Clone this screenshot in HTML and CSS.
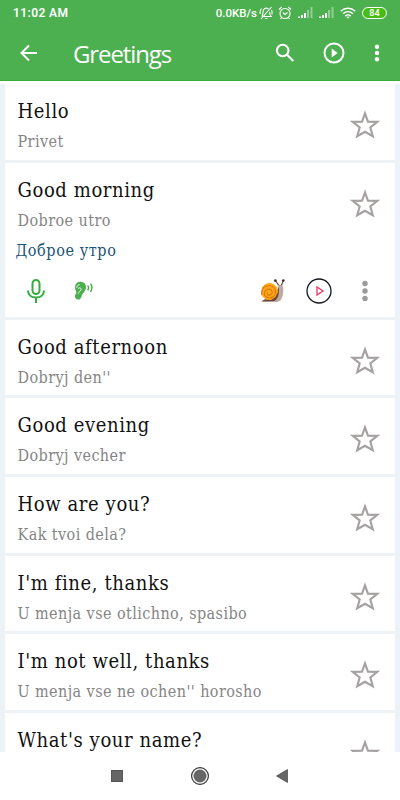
FILE: index.html
```html
<!DOCTYPE html>
<html lang="en">

<head>
    <meta charset="utf-8">
    <title>Greetings</title>
    <link rel="stylesheet" href="styles.css">
</head>

<body>

    <svg class="symbols">
        <symbol id="star" viewBox="0 0 30 30">
            <path d="M15 4.2l2.800 7.800 8.700.1-6.500 5.200 2.300 8.200-7.300-4.200-7.300 4.200 2.300-8.200-6.500-5.200 8.700-.1z" fill="none" stroke="#a5a1a1" stroke-width="2" stroke-miterlimit="8" />
        </symbol>
        <symbol id="signal" viewBox="0 0 15 11">
            <path d="M0 11V9.500h2V11zM3 11V8h2v3zM6 11V6h2v5z" fill="#fff" />
            <path d="M9 11V3h2v8zM12.500 11V0h2v11z" fill="#fff" opacity=".4" />
        </symbol>
    </svg>

    <header class="header">
        <div class="status">
            <span class="time">11:02 AM</span>
            <span class="speed">0.0KB/s</span>
            <svg class="bell" viewBox="0 0 14 14" fill="none" stroke="#fff" stroke-width="1.1">
                <path d="M3 10.500h9c-1-1-1.300-2-1.300-4.500M9.500 3C7 1 4 2.500 4 6c0 2-.3 3-1 4.500M6 12.500h2.500M12.500 1L2 13M1.200 8c-.4-2 0-4 1.300-5.500M12.500 4c.7 1.500.7 3 .3 4.500" />
            </svg>
            <svg class="alarm" viewBox="0 0 14 14" fill="none" stroke="#fff" stroke-width="1.100">
                <circle cx="7" cy="7.500" r="5" />
                <path d="M1 3.500L3.800 1M13 3.500L10.200 1M4.800 6.500L7 8.500l2.500-2M3.500 11.500l-1 1.500M10.500 11.500l1 1.500" />
            </svg>
            <svg class="signal"><use href="#signal" /></svg>
            <svg class="signal"><use href="#signal" /></svg>
            <svg class="wifi" viewBox="0 0 16 12" fill="none" stroke="#fff" stroke-width="1.5">
                <path d="M.7 4.200c4.200-3.900 10.400-3.900 14.600 0M3 6.700c3-2.700 7-2.700 10 0M5.300 9.100c1.600-1.500 3.800-1.500 5.400 0" />
                <path d="M6.500 10L8 11.700 9.500 10c-.9-.8-2.100-.8-3 0z" fill="#fff" stroke="none" />
            </svg>
            <span class="battery">84</span>
        </div>
        <div class="toolbar">
            <svg class="back" viewBox="0 0 18 18" fill="none" stroke="#fff" stroke-width="2">
                <path d="M17 9H2M9 1.500L1.500 9 9 16.500" />
            </svg>
            <h1 class="title">Greetings</h1>
            <svg class="search" viewBox="0 0 20 20" fill="none" stroke="#fff" stroke-width="2.100">
                <circle cx="7.700" cy="7.500" r="5.800" />
                <path d="M11.800 11.600L18.300 18" />
            </svg>
            <svg class="play" viewBox="0 0 22 22">
                <circle cx="11" cy="11" r="9.500" fill="none" stroke="#fff" stroke-width="2" />
                <path d="M8.700 6.500v9l6-4.500z" fill="#fff" />
            </svg>
            <svg class="more" viewBox="0 0 6 18" fill="#fff">
                <circle cx="3" cy="2.800" r="2.200" />
                <circle cx="3" cy="9" r="2.200" />
                <circle cx="3" cy="15.200" r="2.200" />
            </svg>
        </div>
    </header>

    <main class="list">
        <div class="card">
            <div class="phrase">Hello</div>
            <div class="translit">Privet</div>
            <svg class="star"><use href="#star" /></svg>
        </div>

        <div class="card open">
            <div class="phrase">Good morning</div>
            <div class="translit">Dobroe utro</div>
            <svg class="star"><use href="#star" /></svg>
            <div class="russian">Доброе утро</div>
            <div class="actions">
                <svg class="mic" viewBox="0 0 18 24" fill="none" stroke="#35ad3c" stroke-width="2">
                    <rect x="5.500" y="1" width="7" height="14" rx="3.500" />
                    <path d="M1 11.500c0 4.500 3.500 7 8 7s8-2.500 8-7M9 18.500V24" />
                </svg>
                <svg class="ear" viewBox="0 0 20 20">
                    <path d="M1 6.500C1 2.800 3.300.8 6.500.8c3.500 0 5.500 2.300 5.500 5.400 0 3.200-1.800 4.700-3.300 6.500-1.400 1.800-1 5.800-4.500 5.800-2.400 0-3.500-1.700-3.200-4 .2-1.300 1.400-1.700 1.300-3C2.200 10 1 8.600 1 6.500z" fill="#4caf50" />
                    <path d="M2.800 7c0-2.200 1.200-3.300 2.900-3.300M4 7.700c2-1.700 3.500-.3 3 1.200-.6 1.600-2.700 1.800-2.700 3.800" fill="none" stroke="#fff" stroke-width=".9" />
                    <path d="M13.700 4.300c1 1.500 1 3.400 0 5M16.500 2.500c1.900 2.800 1.900 5.700 0 8.500" fill="none" stroke="#35ad3c" stroke-width="1.300" />
                </svg>
                <svg class="snail" viewBox="0 0 24 24">
                    <path d="M.5 23c4-.2 7-3 10-5 3-1.500 6-5.500 7-10l-3-6 .7-.5 3.300 4.500h1.500l2-4.500.8.4-1.300 5c1.300 2 .8 5 .4 8-.5 5-3 8-6.400 8z" fill="#c0a9a2" />
                    <path d="M.5 22.500c3-3.500 7-2 10-5 3-1.500 5.500-4 7.300-10 .3 6 .3 11.500-4.300 14.500z" fill="#6b463d" />
                    <path d="M14.500 1.800l3.300 4.500M22.300 1.500l-2 4.800" fill="none" stroke="#6b463d" stroke-width="1" />
                    <circle cx="14.300" cy="1.600" r="1.400" fill="#49332f" />
                    <circle cx="22.300" cy="1.600" r="1.400" fill="#49332f" />
                    <path d="M1 8.500l3-3.200 4.500-1.500 4.500 1.500L16 8.500l1 4.500-2.500 5-4.500 3-5-.3-4.200-4z" fill="#ffa719" />
                    <path d="M.8 16C-.5 9.500 4 6.500 8.500 6.800c4.200.3 6.400 3.300 6 7-.4 3.300-3.500 5.700-7 5-3.500-.6-4.700-3.300-3.900-5.800.8-2.600 4.200-3.700 6.200-2.200 2.200 1.600 1.500 4.800-.8 5.300-1.800.4-3.200-1.100-2.500-2.600" fill="none" stroke="#d9780e" stroke-width="1.100" />
                </svg>
                <svg class="listen" viewBox="0 0 26 26" fill="none">
                    <circle cx="13" cy="13" r="12" stroke="#15171f" stroke-width="1.300" />
                    <path d="M11 9v8l6-4z" stroke="#f4365b" stroke-width="1.300" />
                </svg>
                <svg class="dots" viewBox="0 0 6 22" fill="#9c9a9a">
                    <circle cx="3" cy="3.500" r="2.700" />
                    <circle cx="3" cy="11" r="2.700" />
                    <circle cx="3" cy="18.500" r="2.700" />
                </svg>
            </div>
        </div>

        <div class="card">
            <div class="phrase">Good afternoon</div>
            <div class="translit">Dobryj den''</div>
            <svg class="star"><use href="#star" /></svg>
        </div>

        <div class="card">
            <div class="phrase">Good evening</div>
            <div class="translit">Dobryj vecher</div>
            <svg class="star"><use href="#star" /></svg>
        </div>

        <div class="card">
            <div class="phrase">How are you?</div>
            <div class="translit">Kak tvoi dela?</div>
            <svg class="star"><use href="#star" /></svg>
        </div>

        <div class="card">
            <div class="phrase">I'm fine, thanks</div>
            <div class="translit">U menja vse otlichno, spasibo</div>
            <svg class="star"><use href="#star" /></svg>
        </div>

        <div class="card">
            <div class="phrase">I'm not well, thanks</div>
            <div class="translit">U menja vse ne ochen'' horosho</div>
            <svg class="star"><use href="#star" /></svg>
        </div>

        <div class="card">
            <div class="phrase">What's your name?</div>
            <svg class="star"><use href="#star" /></svg>
        </div>
    </main>

    <nav class="navbar">
        <svg class="recent" viewBox="0 0 12 12">
            <rect x=".5" y=".5" width="11" height="11" fill="#666" stroke="#555" />
        </svg>
        <svg class="home" viewBox="0 0 20 20">
            <circle cx="10" cy="10" r="8.400" fill="none" stroke="#333" stroke-width="1.200" />
            <circle cx="10" cy="10" r="6.500" fill="#666" />
        </svg>
        <svg class="return" viewBox="0 0 12 14">
            <path d="M11.500.5v13L.5 7z" fill="#666" stroke="#444" stroke-width=".7" />
        </svg>
    </nav>

</body>

</html>
```

FILE: styles.css
```css
* {
    box-sizing: border-box;
}

body {
    margin: 0;
    height: 800px;
    overflow: hidden;
    display: flex;
    flex-direction: column;
    background-color: white;
}

svg {
    display: block;
    flex-shrink: 0;
}

.symbols {
    display: none;
}

.header {
    height: 81px;
    flex-shrink: 0;
    background-color: #4caf50;
    border-bottom: 1px solid #35ad3c;
    color: white;
}

.status {
    height: 25px;
    display: flex;
    align-items: center;
    padding: 0 13px;
    font-family: Roboto, sans-serif;
    font-size: 12px;
    font-weight: 600;
}

.time {
    margin-right: auto;
    letter-spacing: 0.4px;
}

.speed {
    font-size: 11.5px;
    font-weight: 500;
}

.bell {
    width: 14px;
    height: 14px;
    margin-left: 2px;
}

.alarm {
    width: 14px;
    height: 14px;
    margin-left: 5px;
}

.signal {
    width: 15px;
    height: 11px;
    margin-left: 6px;
}

.wifi {
    width: 16px;
    height: 12px;
    margin-left: 6px;
}

.battery {
    width: 25px;
    height: 12px;
    margin-left: 6px;
    border: 1px solid white;
    border-radius: 6px;
    background-color: #45bd16;
    font-size: 9px;
    line-height: 10px;
    text-align: center;
}

.toolbar {
    height: 56px;
    display: flex;
    align-items: center;
    padding: 0 20px;
}

.back {
    width: 18px;
    height: 18px;
}

.title {
    margin: 0 auto 0 35px;
    font-family: "Open Sans", sans-serif;
    font-size: 24px;
    font-weight: 400;
    letter-spacing: -1.1px;
}

.search {
    width: 20px;
    height: 20px;
    margin-right: 28px;
}

.play {
    width: 22px;
    height: 22px;
    margin-right: 29px;
}

.more {
    width: 6px;
    height: 18px;
}

.list {
    height: 671px;
    flex-shrink: 0;
    overflow: hidden;
    display: flex;
    flex-direction: column;
    gap: 3px;
    padding: 0 5px;
    border-top: 3px solid white;
    background-color: #edf2f6;
    font-family: "DejaVu Serif Condensed", "DejaVu Serif", serif;
    font-stretch: condensed;
    font-variant-ligatures: none;
}

.card {
    height: 75.6px;
    flex-shrink: 0;
    display: grid;
    grid-template-columns: 1fr 32px;
    grid-template-rows: 43px 32px;
    padding: 0 14.5px 0 12.5px;
    background-color: white;
    white-space: nowrap;
}

.open {
    height: 154.3px;
    grid-template-rows: 43px 32px 26px 53px;
}

.phrase {
    padding-top: 13px;
    font-size: 20px;
    line-height: 28px;
    letter-spacing: 0.6px;
    color: #111;
}

.translit {
    grid-column: 1;
    grid-row: 2;
    padding-top: 3px;
    font-size: 16px;
    line-height: 24px;
    letter-spacing: 0.42px;
    color: #858585;
}

.star {
    grid-column: 2;
    grid-row: 1 / 3;
    width: 32px;
    height: 32px;
    margin-top: 25px;
}

.russian {
    grid-column: 1;
    padding-top: 1px;
    margin-left: -2px;
    font-size: 16px;
    line-height: 24px;
    letter-spacing: 0.6px;
    color: #1b5475;
}

.actions {
    grid-column: 1 / 3;
    display: flex;
    align-items: center;
    padding: 2px 13px 0 9px;
}

.mic {
    width: 18px;
    height: 24px;
}

.ear {
    width: 20px;
    height: 20px;
    margin-left: 29px;
}

.snail {
    width: 24px;
    height: 24px;
    margin-left: auto;
}

.listen {
    width: 26px;
    height: 26px;
    margin-left: 21px;
}

.dots {
    width: 6px;
    height: 22px;
    margin-left: 30px;
}

.navbar {
    flex: 1;
    display: flex;
    align-items: center;
    justify-content: center;
    padding-right: 1px;
    background-color: white;
}

.recent {
    width: 12px;
    height: 12px;
    margin-right: 67px;
}

.home {
    width: 20px;
    height: 20px;
}

.return {
    width: 12px;
    height: 14px;
    margin-left: 66px;
}
```
